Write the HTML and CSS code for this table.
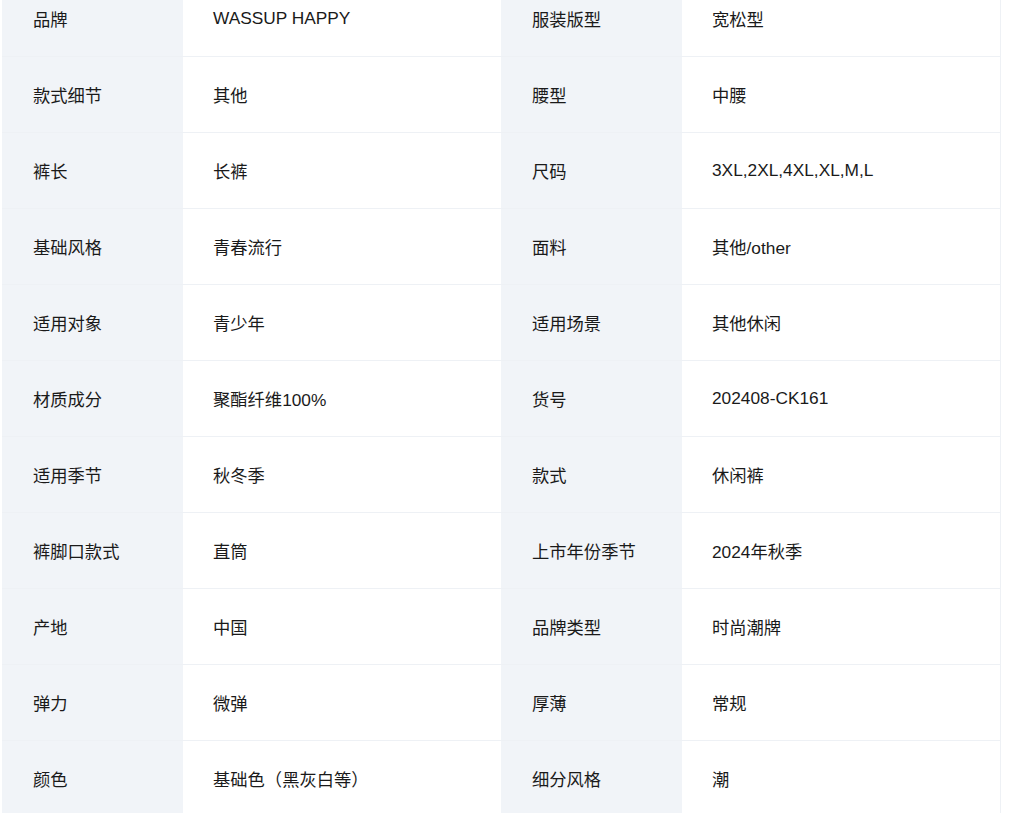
FILE: index.html
```html
<!DOCTYPE html>
<html lang="zh-CN">
<head>
<meta charset="utf-8">
<link rel="stylesheet" href="styles.css">
</head>
<body>
<div class="spec">
  <div class="row"><div class="k">品牌</div><div class="v">WASSUP HAPPY</div><div class="k">服装版型</div><div class="v">宽松型</div></div>
  <div class="row"><div class="k">款式细节</div><div class="v">其他</div><div class="k">腰型</div><div class="v">中腰</div></div>
  <div class="row"><div class="k">裤长</div><div class="v">长裤</div><div class="k">尺码</div><div class="v">3XL,2XL,4XL,XL,M,L</div></div>
  <div class="row"><div class="k">基础风格</div><div class="v">青春流行</div><div class="k">面料</div><div class="v">其他/other</div></div>
  <div class="row"><div class="k">适用对象</div><div class="v">青少年</div><div class="k">适用场景</div><div class="v">其他休闲</div></div>
  <div class="row"><div class="k">材质成分</div><div class="v">聚酯纤维100%</div><div class="k">货号</div><div class="v">202408-CK161</div></div>
  <div class="row"><div class="k">适用季节</div><div class="v">秋冬季</div><div class="k">款式</div><div class="v">休闲裤</div></div>
  <div class="row"><div class="k">裤脚口款式</div><div class="v">直筒</div><div class="k">上市年份季节</div><div class="v">2024年秋季</div></div>
  <div class="row"><div class="k">产地</div><div class="v">中国</div><div class="k">品牌类型</div><div class="v">时尚潮牌</div></div>
  <div class="row"><div class="k">弹力</div><div class="v">微弹</div><div class="k">厚薄</div><div class="v">常规</div></div>
  <div class="row"><div class="k">颜色</div><div class="v">基础色（黑灰白等）</div><div class="k">细分风格</div><div class="v">潮</div></div>
</div>
</body>
</html>
```
FILE: styles.css
```css
html, body {
  margin: 0;
  padding: 0;
  background: #ffffff;
}
body {
  font-family: "Liberation Sans", "Noto Sans CJK SC", sans-serif;
  font-size: 17.3px;
  color: #1a1a1a;
  overflow: hidden;
}
.spec {
  margin: -19px 0 0 2px;
  width: 999px;
  border-right: 1px solid #eef1f5;
  box-sizing: border-box;
}
.row {
  display: grid;
  grid-template-columns: 181px 318px 181px 1fr;
  height: 76px;
  border-bottom: 1px solid #eef1f5;
  box-sizing: border-box;
}
.k, .v {
  display: flex;
  align-items: center;
  padding-bottom: 1px;
  white-space: nowrap;
}
.k {
  background: #f1f4f8;
  padding-left: 31px;
}
.v {
  background: #ffffff;
  padding-left: 30px;
}
```
